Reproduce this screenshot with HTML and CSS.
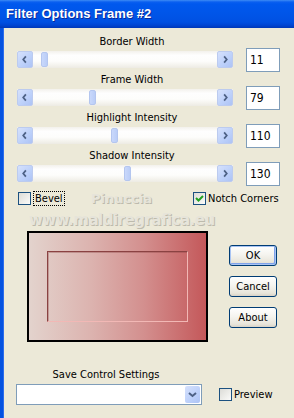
FILE: index.html
```html
<!DOCTYPE html>
<html lang="en">
<head>
    <meta charset="UTF-8">
    <title>Filter Options Frame #2</title>
    <link rel="stylesheet" href="styles.css">
</head>
<body>

<div class="window">
    <div class="titlebar">Filter Options Frame #2</div>

    <div class="client">
        <div class="sliders">
            <div class="slider-row">
                <div class="slider-label">Border Width</div>
                <div class="slider-line">
                    <div class="scrollbar">
                        <span class="sb-btn"><svg viewBox="0 0 16 17"><polyline points="9,5 6,8.5 9,12"/></svg></span>
                        <span class="sb-track"><span class="sb-thumb" style="margin-left: 8px"></span></span>
                        <span class="sb-btn"><svg viewBox="0 0 16 17"><polyline points="7,5 10,8.5 7,12"/></svg></span>
                    </div>
                    <div class="numbox">11</div>
                </div>
            </div>

            <div class="slider-row">
                <div class="slider-label">Frame Width</div>
                <div class="slider-line">
                    <div class="scrollbar">
                        <span class="sb-btn"><svg viewBox="0 0 16 17"><polyline points="9,5 6,8.5 9,12"/></svg></span>
                        <span class="sb-track"><span class="sb-thumb" style="margin-left: 56px"></span></span>
                        <span class="sb-btn"><svg viewBox="0 0 16 17"><polyline points="7,5 10,8.5 7,12"/></svg></span>
                    </div>
                    <div class="numbox">79</div>
                </div>
            </div>

            <div class="slider-row">
                <div class="slider-label">Highlight Intensity</div>
                <div class="slider-line">
                    <div class="scrollbar">
                        <span class="sb-btn"><svg viewBox="0 0 16 17"><polyline points="9,5 6,8.5 9,12"/></svg></span>
                        <span class="sb-track"><span class="sb-thumb" style="margin-left: 78px"></span></span>
                        <span class="sb-btn"><svg viewBox="0 0 16 17"><polyline points="7,5 10,8.5 7,12"/></svg></span>
                    </div>
                    <div class="numbox">110</div>
                </div>
            </div>

            <div class="slider-row">
                <div class="slider-label">Shadow Intensity</div>
                <div class="slider-line">
                    <div class="scrollbar">
                        <span class="sb-btn"><svg viewBox="0 0 16 17"><polyline points="9,5 6,8.5 9,12"/></svg></span>
                        <span class="sb-track"><span class="sb-thumb" style="margin-left: 91px"></span></span>
                        <span class="sb-btn"><svg viewBox="0 0 16 17"><polyline points="7,5 10,8.5 7,12"/></svg></span>
                    </div>
                    <div class="numbox">130</div>
                </div>
            </div>
        </div>

        <div class="checks">
            <label class="check">
                <span class="box"></span>
                <span class="focus">Bevel</span>
            </label>
            <label class="check">
                <span class="box"><svg viewBox="0 0 11 11"><polyline points="2,5 4.5,7.5 9,3"/></svg></span>
                <span>Notch Corners</span>
            </label>
        </div>

        <div class="middle">
            <div class="preview">
                <div class="preview-inner"></div>
            </div>
            <div class="buttons">
                <button class="btn default">OK</button>
                <button class="btn">Cancel</button>
                <button class="btn">About</button>
            </div>
        </div>

        <div class="save">
            <div class="save-group">
                <div class="save-label">Save Control Settings</div>
                <div class="combo">
                    <span class="combo-btn"><svg viewBox="0 0 15 17"><polyline points="4,7 7.5,10 11,7"/></svg></span>
                </div>
            </div>
            <label class="check preview-check">
                <span class="box"></span>
                <span>Preview</span>
            </label>
        </div>

        <div class="watermark">
            <div class="wm-name">Pinuccia</div>
            <div class="wm-url">www.maldiregrafica.eu</div>
        </div>
    </div>
</div>

</body>
</html>
```

FILE: styles.css
```css
body {
    margin: 0;
    background-color: #ece9d8;
    font-family: "DejaVu Sans Condensed", "DejaVu Sans", sans-serif;
    font-size: 11px;
    color: #000;
}

.window {
    width: 294px;
    height: 418px;
    overflow: hidden;
    display: flex;
    flex-direction: column;
}

.titlebar {
    height: 28px;
    line-height: 28px;
    padding-left: 6px;
    background: linear-gradient(#3d8cf5 0, #0a5ff0 2px, #0058ee 4px, #0055e8 14px, #0050e2 22px, #0046d4 25px, #0038b8 28px);
    color: #fff;
    font-family: "Liberation Sans", Arial, sans-serif;
    font-weight: bold;
    font-size: 13px;
    text-shadow: 1px 1px 0 #0a2a9a;
}

.client {
    position: relative;
    flex: 1;
    border-left: 3px solid #0552e0;
    box-shadow: inset 1px 0 0 #2c6cec;
}

/* sliders */

.sliders {
    padding: 7px 0 0 14px;
}

.slider-row {
    margin-bottom: 5px;
}

.slider-label {
    width: 230px;
    height: 14px;
    line-height: 14px;
    text-align: center;
    margin-bottom: 2px;
}

.slider-line {
    display: flex;
    align-items: center;
    gap: 13px;
    height: 17px;
}

.scrollbar {
    width: 216px;
    height: 17px;
    display: flex;
    background: linear-gradient(#f3f1ec, #fefefe 25%, #fdfdfb 60%, #edebe3);
}

.sb-btn {
    width: 16px;
    height: 17px;
    box-sizing: border-box;
    border: 1px solid #bccbef;
    border-radius: 2px;
    background: linear-gradient(135deg, #d6e1fc, #bcd0fa 60%, #adc3f5);
}

.sb-btn svg {
    display: block;
    width: 14px;
    height: 15px;
}

.sb-btn polyline,
.combo-btn polyline {
    fill: none;
    stroke: #4d6185;
    stroke-width: 2;
}

.sb-track {
    flex: 1;
    padding-top: 1px;
}

.sb-thumb {
    display: block;
    width: 7px;
    height: 15px;
    box-sizing: border-box;
    border: 1px solid #b4c6ef;
    border-radius: 2px;
    background: linear-gradient(to right, #c9d8fb, #bacdf7);
}

.numbox {
    width: 34px;
    height: 24px;
    flex-shrink: 0;
    box-sizing: border-box;
    border: 1px solid #7f9db9;
    background: #fff;
    padding: 4px 0 0 3px;
    font-size: 12px;
    line-height: 14px;
}

/* checkboxes */

.checks {
    display: grid;
    grid-template-columns: 175px auto;
    margin-top: 9px;
    padding-left: 15px;
}

.check {
    display: flex;
    align-items: center;
    gap: 2px;
    height: 15px;
}

.box {
    width: 13px;
    height: 13px;
    flex-shrink: 0;
    box-sizing: border-box;
    border: 1px solid #1c5180;
    background: linear-gradient(135deg, #dcdcd7, #fbfbf9);
}

.box svg {
    display: block;
    width: 11px;
    height: 11px;
}

.box polyline {
    fill: none;
    stroke: #21a121;
    stroke-width: 2;
}

.focus {
    border: 1px dotted #000;
    padding: 0 1px;
    line-height: 13px;
}

/* preview + buttons */

.middle {
    display: flex;
    margin-top: 25px;
    padding-left: 24px;
}

.preview {
    width: 181px;
    height: 111px;
    box-sizing: border-box;
    border: 2px solid #000;
    padding: 18px;
    background: linear-gradient(to right, #e3d3cd, #dcb3af 35%, #d38f8e 65%, #c4585a);
}

.preview-inner {
    height: 100%;
    box-sizing: border-box;
    border: 1px solid;
    border-color: #8a4242 #f2b8b5 #f2b8b5 #8a4242;
    box-shadow: inset 1px 1px 0 rgba(138, 66, 66, 0.35);
}

.buttons {
    display: flex;
    flex-direction: column;
    gap: 10px;
    margin-left: 21px;
    padding-top: 14px;
}

.btn {
    width: 48px;
    height: 21px;
    box-sizing: border-box;
    border: 1px solid #003c74;
    border-radius: 3px;
    background: linear-gradient(#ffffff, #f5f4ef 45%, #e8e5da 85%, #d8d2c6);
    font-family: inherit;
    font-size: 11px;
    color: #000;
    padding: 0;
}

.btn.default {
    box-shadow: inset 0 0 0 1px #a9c4f3, inset -1px -1px 0 1px #7fa2ea;
}

/* save settings */

.save {
    display: flex;
    align-items: flex-end;
    margin-top: 26px;
    padding-left: 13px;
}

.save-group {
    width: 186px;
}

.save-label {
    line-height: 14px;
    text-align: center;
    padding-right: 6px;
    margin-bottom: 2px;
}

.combo {
    height: 21px;
    box-sizing: border-box;
    border: 1px solid #7f9db9;
    background: #fff;
    display: flex;
    justify-content: flex-end;
    padding: 1px;
}

.combo-btn {
    width: 15px;
    height: 17px;
    border-radius: 2px;
    background: linear-gradient(135deg, #d6e1fc, #bcd0fa 60%, #adc3f5);
}

.combo-btn svg {
    display: block;
    width: 15px;
    height: 17px;
}

.preview-check {
    margin-left: 17px;
    height: 21px;
}

/* watermark over the dialog */

.watermark {
    position: absolute;
    left: 26px;
    top: 163px;
    font-family: "DejaVu Sans", sans-serif;
    font-weight: bold;
    color: #e6e4da;
    text-shadow: 1px 1px 0 #bdbaad;
}

.wm-name {
    margin-left: 62px;
    font-size: 13px;
    line-height: 16px;
}

.wm-url {
    margin-top: 4px;
    font-size: 15px;
    line-height: 18px;
    letter-spacing: -0.5px;
}
```
